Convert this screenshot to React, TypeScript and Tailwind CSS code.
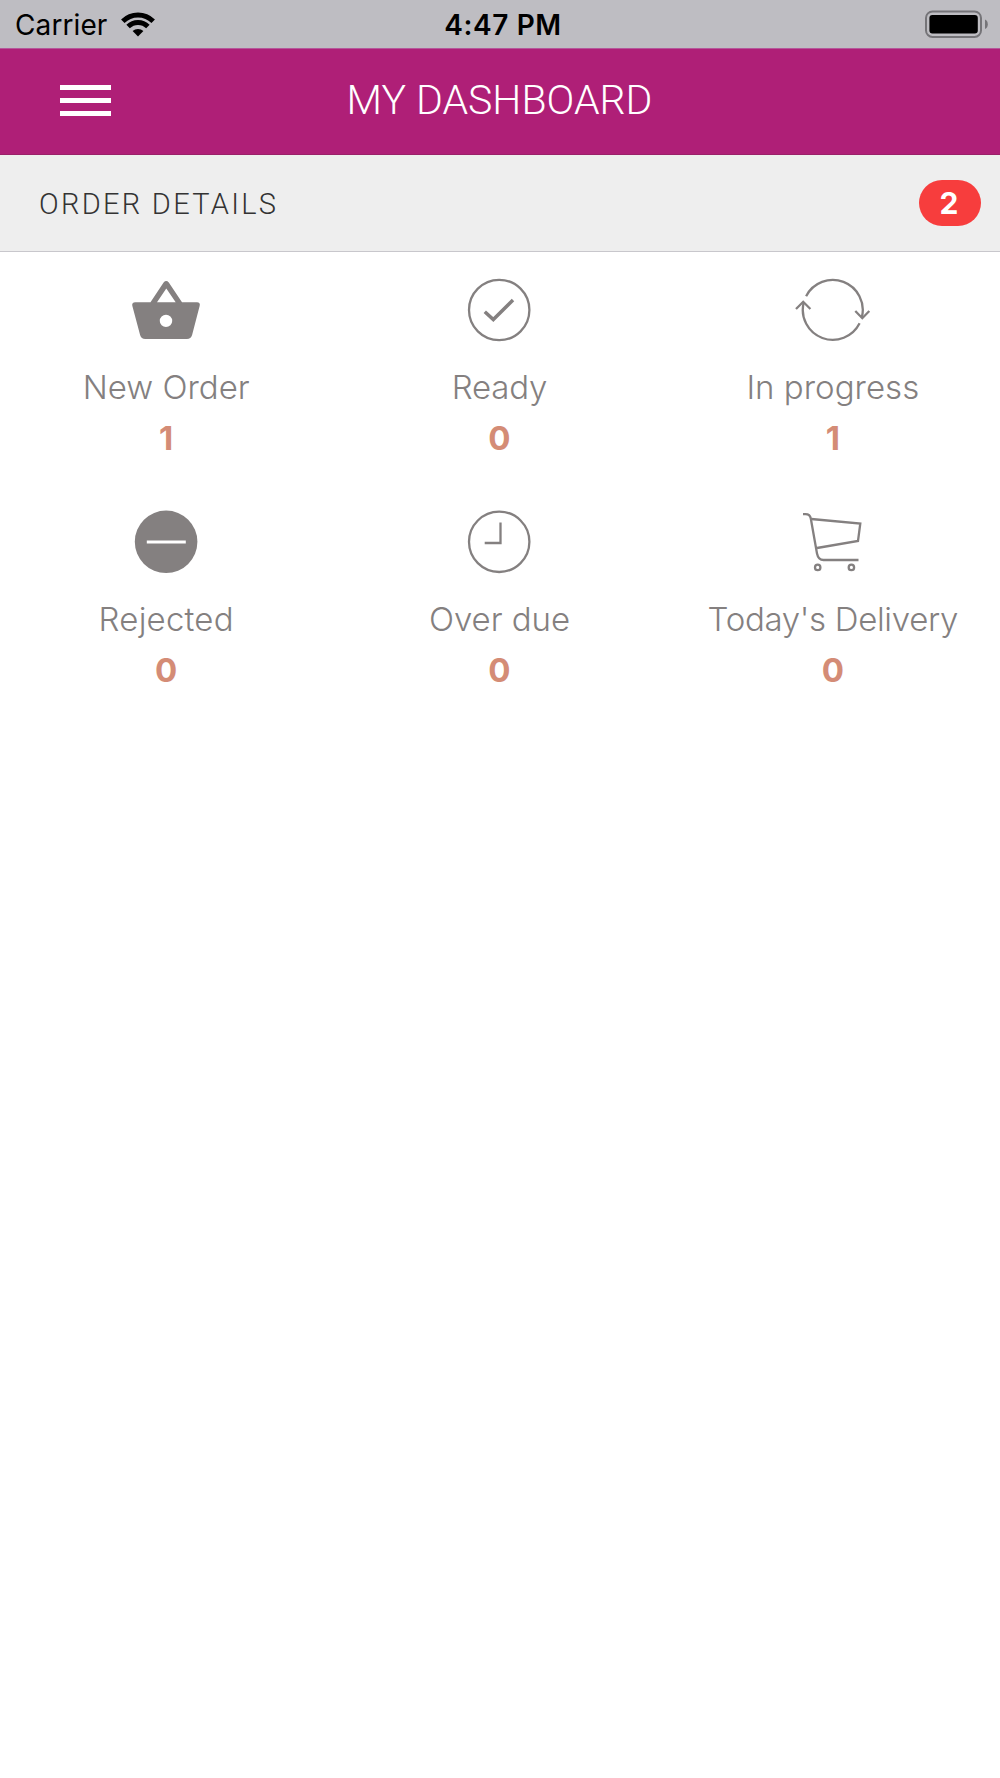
import type { ReactNode } from 'react'

type OrderStat = {
  label: string
  count: number
  icon: ReactNode
  labelClass: string
}

function StatIcon({ children }: { children: ReactNode }) {
  return (
    <svg
      className="h-16 w-20 shrink-0"
      viewBox="0 0 80 64"
      fill="none"
      stroke="#848080"
      strokeWidth="2.3"
    >
      {children}
    </svg>
  )
}

const stats: OrderStat[] = [
  {
    label: 'New Order',
    count: 1,
    labelClass: 'tracking-[0px]',
    icon: (
      <StatIcon>
        <path
          fill="#848080"
          stroke="none"
          fillRule="evenodd"
          d="M8.3 24.3H23.5L36.6 4.4Q39.2 1.6 41.8 4.4L55 24.3H70Q73.5 24.6 72.7 27.8L65.1 57Q63.9 61 59.9 61H18.2Q14.2 61 13.1 57L5.3 27.8Q4.6 24.6 8.3 24.3ZM30 24.3H48.7L39.3 10.5ZM39 36.7A6.2 6.2 0 1 0 39 49.1A6.2 6.2 0 1 0 39 36.7Z"
        />
      </StatIcon>
    ),
  },
  {
    label: 'Ready',
    count: 0,
    labelClass: 'tracking-[-0.15px]',
    icon: (
      <StatIcon>
        <circle cx="39.2" cy="32" r="30.2" />
        <path d="M24.8 33.7L33.3 41.5L53 22" strokeWidth="3.5" />
      </StatIcon>
    ),
  },
  {
    label: 'In progress',
    count: 1,
    labelClass: 'tracking-[0.03px]',
    icon: (
      <StatIcon>
        <path d="M13.1 18.2A30 30 0 0 1 68.8 39.5" />
        <path d="M66.6 45.3A30 30 0 0 1 10.7 24.5" />
        <path d="M62.3 33L69.3 40.2L76.3 33M3 31L10.2 23.8L17.4 31" />
      </StatIcon>
    ),
  },
  {
    label: 'Rejected',
    count: 0,
    labelClass: 'tracking-[0.2px]',
    icon: (
      <StatIcon>
        <circle cx="39.1" cy="31.8" r="31.3" fill="#848080" stroke="none" />
        <path d="M19.8 31.9H58.8" stroke="white" strokeWidth="3" />
      </StatIcon>
    ),
  },
  {
    label: 'Over due',
    count: 0,
    labelClass: 'tracking-[-0.05px]',
    icon: (
      <StatIcon>
        <circle cx="39.2" cy="31.8" r="30.2" />
        <path d="M40.5 12.5V33H24.7" />
      </StatIcon>
    ),
  },
  {
    label: "Today's Delivery",
    count: 0,
    labelClass: 'tracking-[-0.32px]',
    icon: (
      <StatIcon>
        <path d="M10 4.2H12.5Q17 4.2 17.8 8.5L24 43.5Q25.3 50 30.5 50H65.5" />
        <path d="M18.3 9L67.3 13.5L65 31L24 38" />
        <circle cx="24.7" cy="57.4" r="2.7" />
        <circle cx="58.4" cy="57.4" r="2.7" />
      </StatIcon>
    ),
  },
]

function StatusBar() {
  return (
    <div className="grid h-[49px] grid-cols-3 items-center border-b border-[#b5569a] bg-[#bebdc2] pr-3 pl-[15px] font-[Inter,sans-serif] leading-none text-black">
      <div className="flex items-center gap-[14px]">
        <span className="pt-[2px] text-[28px] tracking-[0.1px]">Carrier</span>
        <svg className="h-[25px] w-[34px]" viewBox="0 0 34 25" fill="none" stroke="black" strokeWidth="4.9">
          <path d="M1.8 9.3A21.5 21.5 0 0 1 32.2 9.3" />
          <path d="M7.1 14.6A14 14 0 0 1 26.9 14.6" />
          <path d="M17 24.5L11.6 19.1A7.7 7.7 0 0 1 22.4 19.1Z" fill="black" stroke="none" />
        </svg>
      </div>
      <span className="pt-[2px] pl-[3px] text-center text-[28px] font-semibold tracking-[0.6px]">4:47 PM</span>
      <svg className="h-7 w-[63px] justify-self-end" viewBox="0 0 63 28" fill="none">
        <rect x="1" y="1.5" width="55" height="25.4" rx="6.5" stroke="#757478" strokeWidth="2" />
        <rect x="4.4" y="5" width="48.4" height="18.4" rx="3" fill="black" />
        <path d="M60 9.4Q62.8 10.7 62.8 14.2T60 19.1Z" fill="#757478" />
      </svg>
    </div>
  )
}

function Header() {
  return (
    <header className="grid h-[106px] grid-cols-3 items-center border-b border-[#9a2069] bg-[#af1f77] pb-[2px]">
      <button aria-label="Menu" className="ml-[60px] flex w-[51px] flex-col gap-2">
        <span className="h-[5px] bg-white" />
        <span className="h-[5px] bg-white" />
        <span className="h-[5px] bg-white" />
      </button>
      <h1 className="pr-px text-center font-[Roboto,sans-serif] text-[41px] leading-none font-light whitespace-nowrap text-white">
        MY DASHBOARD
      </h1>
    </header>
  )
}

export default function App() {
  return (
    <div className="min-h-[1778px] bg-white">
      <StatusBar />
      <Header />
      <div className="flex h-[97px] items-center justify-between border-b border-[#c8c7cc] bg-[#eeeeee] pr-[19px] pl-[39px]">
        <h2 className="pt-0.5 font-[Roboto,sans-serif] text-[29px] leading-none font-light tracking-[2.3px] text-[#333]">
          ORDER DETAILS
        </h2>
        <span className="flex h-[46px] w-[62px] items-center justify-center rounded-full bg-[#f73d3d] pr-0.5 font-[Inter,sans-serif] text-[30px] leading-none font-bold text-white">
          2
        </span>
      </div>
      <div className="grid grid-cols-3 gap-y-[52px] pt-[26px] font-[Inter,sans-serif]">
        {stats.map((stat) => (
          <div key={stat.label} className="flex h-[180px] flex-col items-center">
            {stat.icon}
            <span className={`mt-[25px] pr-px text-[33px] leading-10 font-light whitespace-nowrap text-[#848080] ${stat.labelClass}`}>
              {stat.label}
            </span>
            <span className="mt-[11px] pr-px text-[33px] leading-10 font-bold text-[#d48c76]">{stat.count}</span>
          </div>
        ))}
      </div>
    </div>
  )
}
